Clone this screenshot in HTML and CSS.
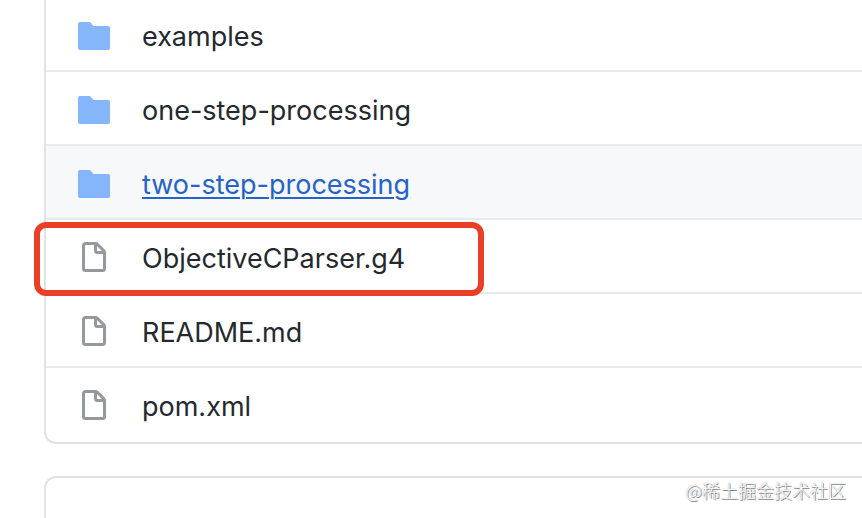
FILE: index.html
```html
<!DOCTYPE html>
<html lang="en">
<head>
  <meta charset="UTF-8">
  <meta name="viewport" content="width=device-width, initial-scale=1.0">
  <title>Files</title>
  <link rel="stylesheet" href="styles.css">
</head>
<body>

<!-- icons shared by the rows -->
<svg class="icon-defs" aria-hidden="true">
  <symbol id="icon-folder" viewBox="0 0 16 16">
    <path d="M1 1A1 1 0 000 2v12a1 1 0 001 1h14a1 1 0 001-1V4a1 1 0 00-1-1H7.75a.25.25 0 01-.2-.1l-.9-1.2c-.33-.44-.85-.7-1.4-.7H1z"/>
  </symbol>
  <symbol id="icon-file" viewBox="0 0 16 16">
    <path fill-rule="evenodd" d="M3.75 1.5a.25.25 0 00-.25.25v11.5c0 .138.112.25.25.25h8.5a.25.25 0 00.25-.25V6H9.75A1.75 1.75 0 018 4.25V1.5H3.75zm5.75.56v2.19c0 .138.112.25.25.25h2.19L9.5 2.06zM2 1.75C2 .784 2.784 0 3.75 0h5.086c.464 0 .909.184 1.237.513l3.414 3.414c.329.328.513.773.513 1.237v8.086A1.75 1.75 0 0112.25 15h-8.5A1.75 1.75 0 012 13.25V1.75z"/>
  </symbol>
</svg>

<main class="page">
  <ul class="file-list">
    <li class="row">
      <svg class="icon folder" aria-hidden="true"><use href="#icon-folder"/></svg>
      <a class="name" href="#examples">examples</a>
    </li>
    <li class="row">
      <svg class="icon folder" aria-hidden="true"><use href="#icon-folder"/></svg>
      <a class="name" href="#one-step-processing">one-step-processing</a>
    </li>
    <li class="row active">
      <svg class="icon folder" aria-hidden="true"><use href="#icon-folder"/></svg>
      <a class="name" href="#two-step-processing">two-step-processing</a>
    </li>
    <li class="row marked">
      <svg class="icon" aria-hidden="true"><use href="#icon-file"/></svg>
      <a class="name" href="#parser">ObjectiveCParser.g4</a>
    </li>
    <li class="row">
      <svg class="icon" aria-hidden="true"><use href="#icon-file"/></svg>
      <a class="name" href="#readme">README.md</a>
    </li>
    <li class="row">
      <svg class="icon" aria-hidden="true"><use href="#icon-file"/></svg>
      <a class="name" href="#pom">pom.xml</a>
    </li>
  </ul>

  <section class="panel"></section>
</main>

<div class="watermark" lang="zh">@稀土掘金技术社区</div>

</body>
</html>
```
FILE: styles.css
```css
*, *::after {
  box-sizing: border-box;
}
body {
  margin: 0;
  background-color: #fff;
  color: #24292f;
  font-family: Inter, "Liberation Sans", sans-serif;
  font-size: 27px;
  line-height: 34px;
}
.icon-defs {
  display: none;
}
.page {
  display: flex;
  flex-direction: column;
  gap: 32px;
  height: 100vh;
  padding-left: 44px;
  overflow: hidden;
}
.file-list {
  flex: none;
  margin: 0;
  padding: 0;
  list-style: none;
  border: 2px solid #e1e2e4;
  border-top: none;
  border-right: none;
  border-bottom-left-radius: 12px;
}
.row {
  display: flex;
  align-items: flex-start;
  gap: 32px;
  padding: 22px 32px 16px;
  border-top: 2px solid #e9eaec;
}
.row:first-child {
  padding-top: 20px;
  border-top: none;
}
.row:last-child {
  padding-bottom: 18px;
}
.row.active {
  background-color: #f6f8fa;
}
.icon {
  flex: none;
  width: 32px;
  height: 32px;
  fill: #96999c;
}
.icon.folder {
  fill: #85b6fb;
}
.name {
  color: inherit;
  text-decoration: none;
}
.active .name {
  color: #2563c9;
  text-decoration: underline;
  text-decoration-thickness: 2px;
  text-underline-offset: 3px;
}
/* red frame drawn over the marked row */
.marked {
  position: relative;
}
.marked::after {
  content: "";
  position: absolute;
  top: 2px;
  left: -12px;
  width: 450px;
  height: 74px;
  border: 6px solid #e93f27;
  border-radius: 12px;
}
.panel {
  flex: 1;
  border-top: 2px solid #e1e2e4;
  border-left: 2px solid #e1e2e4;
  border-top-left-radius: 12px;
}
.watermark {
  position: absolute;
  right: 16px;
  bottom: 15px;
  color: #fff;
  font-family: "Noto Sans CJK SC", sans-serif;
  font-size: 18px;
  font-weight: 300;
  line-height: 26px;
  text-shadow: 0 0 1px #888, 1px 1px 0 #888;
}
```
